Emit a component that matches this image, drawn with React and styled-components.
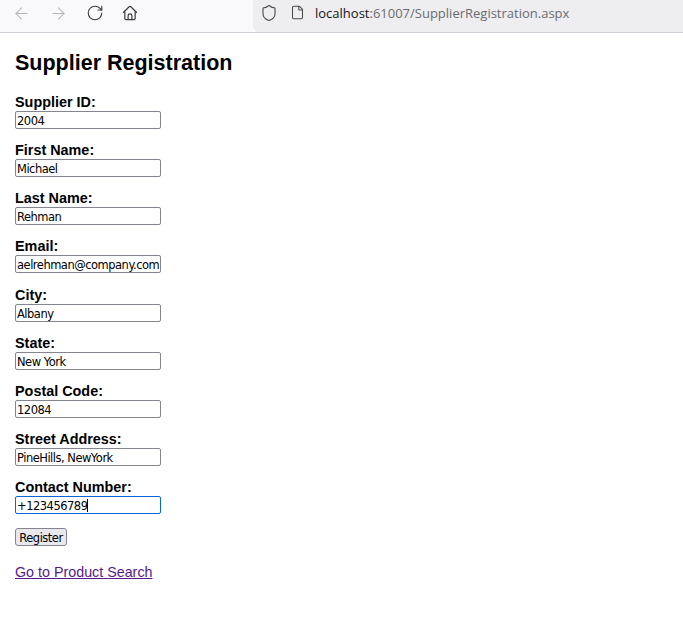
import React, { useEffect, useRef } from 'react';
import styled, { createGlobalStyle } from 'styled-components';
import { ArrowLeft, ArrowRight, RotateCw, Shield, File } from 'lucide-react';

const GlobalStyle = createGlobalStyle`
  html, body {
    margin: 0;
    padding: 0;
    background: #fff;
  }
`;

const Page = styled.div`
  width: 683px;
  height: 635px;
  overflow: hidden;
  font-family: "Liberation Sans", Arial, sans-serif;
  color: #000;
`;

const Toolbar = styled.div`
  display: flex;
  height: 32px;
  background: #f9f9fb;
  border-bottom: 1px solid #cfcfd4;
`;

const NavGroup = styled.div`
  display: flex;
  align-items: center;
  gap: 18px;
  width: 253px;
  padding: 0 0 6px 12px;
  box-sizing: border-box;
`;

const NavIcon = styled.span`
  display: flex;
  color: ${(p) => (p.$disabled ? '#b4b4b8' : '#3c3c40')};
`;

const UrlBar = styled.div`
  flex: 1;
  display: flex;
  align-items: center;
  gap: 12px;
  padding: 0 0 7px 7px;
  background: #eeeef0;
  border-bottom-left-radius: 6px;
  color: #4a4a4f;
`;

const UrlText = styled.div`
  margin-left: -2px;
  font-family: "Open Sans", sans-serif;
  font-size: 13px;
  color: #6b6b70;
`;

const UrlHost = styled.span`
  color: #15141a;
`;

const Content = styled.main`
  padding: 17px 15px 0;
`;

const Title = styled.h2`
  margin: 0 0 19px;
  height: 26px;
  font-size: 21.5px;
  line-height: 26px;
  font-weight: bold;
`;

const Field = styled.div`
  height: 48.125px;
`;

const Label = styled.label`
  display: block;
  height: 16px;
  font-size: 14.4px;
  line-height: 15.5px;
  font-weight: bold;
`;

const InputWrap = styled.div`
  position: relative;
  width: 146px;
  height: 18px;
`;

const Input = styled.input`
  display: block;
  width: 146px;
  height: 18px;
  box-sizing: border-box;
  margin: 0;
  padding: 2px 1px 0;
  font-family: "DejaVu Sans", sans-serif;
  font-size: 11.5px;
  letter-spacing: -0.5px;
  color: #000;
  background: #fff;
  border: 1px solid ${(p) => (p.$focused ? '#0a66d8' : '#85858f')};
  border-radius: 2px;
  outline: none;
`;

const Caret = styled.span`
  position: absolute;
  left: 72px;
  top: 3px;
  width: 1px;
  height: 13px;
  background: #000;
`;

const RegisterButton = styled.button`
  display: block;
  width: 52px;
  height: 18px;
  margin: 0;
  padding: 1px 0 0;
  font-family: "DejaVu Sans", sans-serif;
  font-size: 11.5px;
  letter-spacing: -0.5px;
  color: #000;
  background: #e9e9ed;
  border: 1px solid #85858f;
  border-radius: 3px;
`;

const LinkRow = styled.div`
  margin-top: 17px;
`;

const ProductLink = styled.a`
  font-size: 14.3px;
  line-height: 17px;
  color: #551a8b;
  text-decoration: underline;
`;

const fields = [
  ['Supplier ID:', '2004'],
  ['First Name:', 'Michael'],
  ['Last Name:', 'Rehman'],
  ['Email:', 'michaelrehman@company.com', true],
  ['City:', 'Albany'],
  ['State:', 'New York'],
  ['Postal Code:', '12084'],
  ['Street Address:', 'PineHills, NewYork'],
];

function HomeIcon() {
  return (
    <svg width="16" height="16" viewBox="0 0 17 17" fill="none" stroke="currentColor" strokeWidth="1.3" strokeLinejoin="round">
      <path d="M1.2 8.2 7.6 1.9a1.3 1.3 0 0 1 1.8 0l6.4 6.3" />
      <path d="M3 7v7.2A1.3 1.3 0 0 0 4.3 15.5h8.4a1.3 1.3 0 0 0 1.3-1.3V7" />
      <path d="M6.5 15.5v-4a2 2 0 0 1 4 0v4" />
    </svg>
  );
}

function ScrolledInput({ value }) {
  const ref = useRef(null);
  useEffect(() => {
    ref.current.scrollLeft = ref.current.scrollWidth;
  }, []);
  return <Input ref={ref} defaultValue={value} />;
}

export default function App() {
  return (
    <Page>
      <GlobalStyle />
      <Toolbar>
        <NavGroup>
          <NavIcon $disabled><ArrowLeft size={19} strokeWidth={1.3} /></NavIcon>
          <NavIcon $disabled><ArrowRight size={19} strokeWidth={1.3} /></NavIcon>
          <NavIcon><RotateCw size={18} strokeWidth={1.5} /></NavIcon>
          <NavIcon><HomeIcon /></NavIcon>
        </NavGroup>
        <UrlBar>
          <Shield size={18} strokeWidth={1.5} />
          <File size={15} strokeWidth={1.7} />
          <UrlText><UrlHost>localhost</UrlHost>:61007/SupplierRegistration.aspx</UrlText>
        </UrlBar>
      </Toolbar>
      <Content>
        <Title>Supplier Registration</Title>
        {fields.map(([label, value, scrolled]) => (
          <Field key={label}>
            <Label>{label}</Label>
            <InputWrap>
              {scrolled ? <ScrolledInput value={value} /> : <Input defaultValue={value} />}
            </InputWrap>
          </Field>
        ))}
        <Field>
          <Label>Contact Number:</Label>
          <InputWrap>
            <Input $focused defaultValue="+123456789" />
            <Caret />
          </InputWrap>
        </Field>
        <RegisterButton type="button">Register</RegisterButton>
        <LinkRow>
          <ProductLink href="#">Go to Product Search</ProductLink>
        </LinkRow>
      </Content>
    </Page>
  );
}
